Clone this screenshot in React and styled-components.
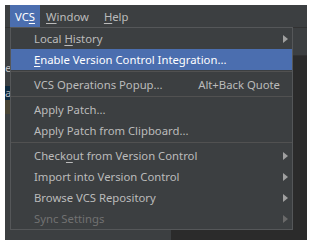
import React from "react";
import styled, { createGlobalStyle } from "styled-components";

const Global = createGlobalStyle`
  html, body {
    margin: 0;
    padding: 0;
    background: #ffffff;
  }
  body {
    font-family: "Noto Sans", "Open Sans", sans-serif;
    font-size: 11.3px;
  }
`;

const Frame = styled.div`
  position: relative;
  margin: 5px 0 0 5px;
  width: 302px;
  height: 235px;
  background: #3c3f41;
  display: flex;
  flex-direction: column;
  overflow: hidden;
`;

const MenuBar = styled.div`
  height: 22px;
  display: flex;
  align-items: stretch;
  padding-left: 5px;
  background: #3c3f41;
  border-bottom: 1px solid #323232;
`;

const BarItem = styled.div`
  display: flex;
  align-items: center;
  padding: 0 ${(p) => p.$right}px 0 ${(p) => p.$left}px;
  color: ${(p) => (p.$active ? "#ffffff" : "#bbbbbb")};
  background: ${(p) => (p.$active ? "#4b6eaf" : "transparent")};
`;

const U = styled.span`
  text-decoration: underline;
  text-underline-offset: 2px;
`;

const Body = styled.div`
  flex: 1;
  display: flex;
`;

const SidePanel = styled.div`
  width: 166px;
  background: #3c3f41;
  display: flex;
  flex-direction: column;
  padding-top: 34px;
`;

const TreeRow = styled.div`
  height: ${(p) => p.$h}px;
  width: 6px;
  background: ${(p) => p.$bg || "transparent"};
  color: #bbbbbb;
  line-height: ${(p) => p.$h}px;
  white-space: nowrap;
`;

const EditorArea = styled.div`
  flex: 1;
  display: flex;
  flex-direction: column;
`;

const TabStrip = styled.div`
  height: 27px;
  background: #3c3f41;
  border-bottom: 1px solid #323232;
`;

const Editor = styled.div`
  flex: 1;
  background: #2b2b2b;
`;

const Popup = styled.div`
  position: absolute;
  left: 5px;
  top: 22px;
  width: 281px;
  background: #3c3f41;
  border: 1px solid #555759;
  display: flex;
  flex-direction: column;
`;

const Item = styled.div`
  height: 21px;
  display: flex;
  align-items: center;
  padding: 0 4px 0 23px;
  color: ${(p) => (p.$disabled ? "#717171" : p.$active ? "#ffffff" : "#bbbbbb")};
  background: ${(p) => (p.$active ? "#4b6eaf" : "transparent")};
  white-space: nowrap;
`;

const Label = styled.span`
  flex: 1;
`;

const Shortcut = styled.span`
  color: #bbbbbb;
  margin-right: 8px;
`;

const Separator = styled.div`
  height: 1px;
  background: #515151;
  margin: 1px 0 2px;
`;

const Arrow = ({ dim }) => (
  <svg width="5" height="8" viewBox="0 0 5 8">
    <path d="M0 0 L5 4 L0 8 Z" fill={dim ? "#6a6a6a" : "#a0a0a0"} />
  </svg>
);

const App = () => {
  return (
    <>
      <Global />
      <Frame>
        <MenuBar>
          <BarItem $active $left={5} $right={5}>
            VC<U>S</U>
          </BarItem>
          <BarItem $left={6} $right={8}>
            <U>W</U>indow
          </BarItem>
          <BarItem $left={7} $right={6}>
            <U>H</U>elp
          </BarItem>
        </MenuBar>
        <Body>
          <SidePanel>
            <TreeRow $h={12}>e</TreeRow>
            <TreeRow $h={12} />
            <TreeRow $h={14} $bg="#0d293e">a</TreeRow>
            <TreeRow $h={14} $bg="#4a4535" />
          </SidePanel>
          <EditorArea>
            <TabStrip />
            <Editor />
          </EditorArea>
        </Body>
        <Popup>
          <Item>
            <Label>
              Local <U>H</U>istory
            </Label>
            <Arrow />
          </Item>
          <Item $active>
            <Label>
              <U>E</U>nable Version Control Integration...
            </Label>
          </Item>
          <Separator />
          <Item>
            <Label>VCS Operations Popup...</Label>
            <Shortcut>Alt+Back Quote</Shortcut>
          </Item>
          <Separator />
          <Item>
            <Label>Apply Patch...</Label>
          </Item>
          <Item>
            <Label>Apply Patch from Clipboard...</Label>
          </Item>
          <Separator />
          <Item>
            <Label>
              Check<U>o</U>ut from Version Control
            </Label>
            <Arrow />
          </Item>
          <Item>
            <Label>Import into Version Control</Label>
            <Arrow />
          </Item>
          <Item>
            <Label>Browse VCS Repository</Label>
            <Arrow />
          </Item>
          <Item $disabled>
            <Label>Sync Settings</Label>
            <Arrow dim />
          </Item>
        </Popup>
      </Frame>
    </>
  );
};

export default App;
